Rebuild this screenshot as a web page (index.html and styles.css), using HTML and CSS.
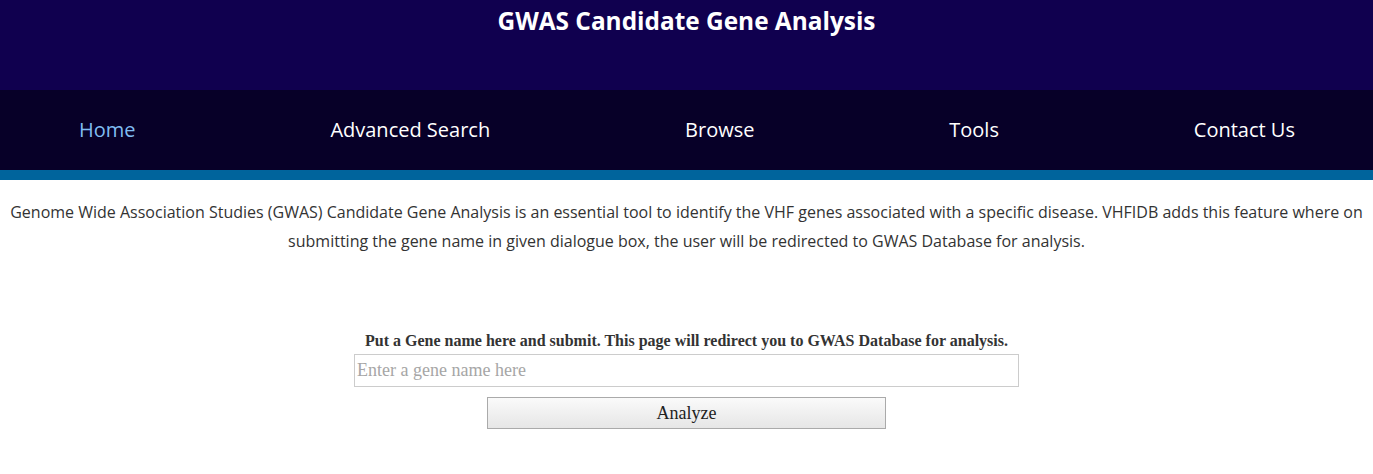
FILE: index.html
```html
<!DOCTYPE html>
<html>
    <head>
        <title>GWAS Candidate Gene Analysis</title>
        <link rel="stylesheet" href="styles.css">
    </head>
    <body>
        <div id="header">
            <h1>GWAS Candidate Gene Analysis</h1>
        </div>
        <!--main navigation-->
        <ul id="nav">
            <li><a href="#" class="active">Home</a></li>
            <li><a href="#">Advanced Search</a></li>
            <li><a href="#">Browse</a></li>
            <li><a href="#">Tools</a></li>
            <li><a href="#">Contact Us</a></li>
        </ul>
        <div id="stripe"></div>

        <p class="intro">Genome Wide Association Studies (GWAS) Candidate Gene Analysis is an essential tool to identify the VHF genes associated with a specific disease. VHFIDB adds this feature where on submitting the gene name in given dialogue box, the user will be redirected to GWAS Database for analysis.</p>

        <form id="gwasForm" method="get" action="#">
            <label for="gene">Put a Gene name here and submit. This page will redirect you to GWAS Database for analysis.</label>
            <input id="gene" type="text" name="gene" placeholder="Enter a gene name here">
            <button type="submit">Analyze</button>
        </form>
    </body>
</html>
```

FILE: styles.css
```css
body {
margin: 0;
font-family: "Open Sans", sans-serif;
background-color: white;
}

#header {
height: 90px;
background-color: #10004f;
}

#header h1 {
margin: 0;
padding-top: 4px;
color: white;
font-size: 24.4px;
font-weight: bold;
text-align: center;
}

#nav {
list-style: none;
margin: 0;
padding: 0 78px 2px 79px;
height: 78px;
display: flex;
align-items: center;
justify-content: space-between;
background-color: #070028;
}

#nav a {
color: white;
font-size: 20px;
text-decoration: none;
}

#nav a.active {
color: #80bdf2;
}

#stripe {
height: 10px;
background-color: #00649c;
}

.intro {
margin: 18px 8px 0;
text-align: center;
font-size: 16px;
line-height: 29px;
color: #333;
}

#gwasForm {
margin-top: 76px;
display: flex;
flex-direction: column;
align-items: center;
font-family: "Liberation Serif", serif;
}

label {
font-weight: bold;
font-size: 16px;
color: #333;
margin-bottom: 4px;
}

input {
width: 665px;
height: 33px;
box-sizing: border-box;
border: 1px solid #ccc;
padding: 0 2px;
font-family: "Liberation Serif", serif;
font-size: 18px;
}

input::placeholder {
color: #a6a6a6;
}

button {
margin-top: 10px;
width: 399px;
height: 32px;
border: 1px solid #aaa;
background: linear-gradient(#fafafa, #e6e6e6);
font-family: "Liberation Serif", serif;
font-size: 18px;
color: #222;
}
```
